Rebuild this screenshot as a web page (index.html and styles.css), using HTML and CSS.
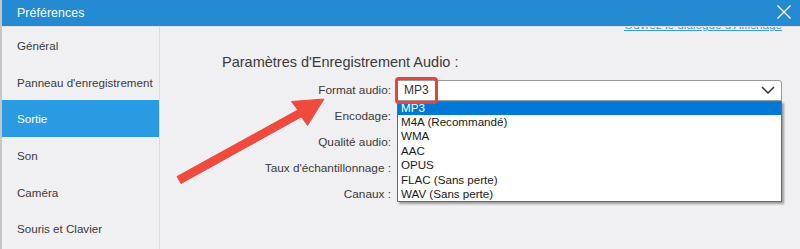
FILE: index.html
```html
<!DOCTYPE html>
<html lang="fr">
<head>
<meta charset="utf-8">
<title>Préférences</title>
<link rel="stylesheet" href="styles.css">
</head>
<body>
<div class="window">
  <div class="titlebar">
    <span class="title">Préférences</span>
    <svg class="close" width="16" height="16" viewBox="0 0 16 16"><path d="M1.5 1.5 L14.5 14.5 M14.5 1.5 L1.5 14.5" stroke="#ffffff" stroke-width="1.3" fill="none"/></svg>
  </div>
  <div class="body">
    <nav class="sidebar">
      <div class="item">Général</div>
      <div class="item">Panneau d'enregistrement</div>
      <div class="item active">Sortie</div>
      <div class="item">Son</div>
      <div class="item">Caméra</div>
      <div class="item">Souris et Clavier</div>
    </nav>
    <main class="main">
      <div class="linkrow"><a class="link">Ouvrez le dialogue d'Affichage</a></div>
      <h2 class="heading">Paramètres d'Enregistrement Audio :</h2>
      <div class="form">
        <div class="label">Format audio:</div>
        <div class="control">
          <div class="select">
            <span class="value">MP3</span>
            <svg class="chev" width="14" height="8" viewBox="0 0 14 8"><path d="M1 1 L7 7 L13 1" stroke="#333" stroke-width="1.5" fill="none"/></svg>
            <div class="highlight"></div>
            <ul class="list">
              <li class="sel">MP3</li>
              <li>M4A (Recommandé)</li>
              <li>WMA</li>
              <li>AAC</li>
              <li>OPUS</li>
              <li>FLAC (Sans perte)</li>
              <li>WAV (Sans perte)</li>
            </ul>
          </div>
        </div>
        <div class="label">Encodage:</div>
        <div class="control"></div>
        <div class="label">Qualité audio:</div>
        <div class="control"></div>
        <div class="label">Taux d'échantillonnage :</div>
        <div class="control"></div>
        <div class="label">Canaux :</div>
        <div class="control"></div>
      </div>
    </main>
  </div>
  <svg class="arrow" width="800" height="249" viewBox="0 0 800 249">
    <polygon points="175,176.5 295.8,110 289.5,101.5 322,99 305.5,125.5 299.4,116.8 179,183.5" fill="#f04a3e" stroke="#f04a3e" stroke-width="1" stroke-linejoin="round"/>
  </svg>
</div>
</body>
</html>
```

FILE: styles.css
```css
html, body {
  margin: 0;
  padding: 0;
}
body {
  width: 800px;
  height: 249px;
  overflow: hidden;
  background: #f0f0f2;
  font-family: "Liberation Sans", Arial, sans-serif;
  color: #3a3a3a;
}
.window {
  position: relative;
  width: 800px;
  height: 249px;
  box-sizing: border-box;
  border-left: 2px solid #c6c6c8;
  display: flex;
  flex-direction: column;
  overflow: hidden;
}
.titlebar {
  position: relative;
  z-index: 2;
  height: 26px;
  flex: none;
  background: #248bd2;
  display: flex;
  align-items: center;
  justify-content: space-between;
  padding: 0 8px 0 15px;
  border-bottom: 1px solid #e2e2e4;
}
.title {
  color: #ffffff;
  font-size: 12.3px;
  letter-spacing: 0.1px;
}
.close {
  display: block;
  margin-top: -3px;
}
.body {
  flex: 1;
  display: flex;
  min-height: 0;
}
.sidebar {
  width: 157px;
  flex: none;
  border-right: 1px solid #dcdcde;
  display: flex;
  flex-direction: column;
}
.item {
  height: 36.7px;
  display: flex;
  align-items: center;
  padding-left: 15px;
  font-size: 11.6px;
  color: #3a3a3a;
  white-space: nowrap;
}
.item.active {
  background: #2a9be2;
  color: #ffffff;
}
.main {
  flex: 1;
  position: relative;
  padding-right: 18px;
}
.linkrow {
  display: flex;
  justify-content: flex-end;
  margin-top: -9px;
  height: 14px;
  line-height: 14px;
}
.link {
  color: #3b9ae6;
  text-decoration: underline;
  font-size: 11.7px;
}
.heading {
  margin: 21px 0 0 62px;
  font-weight: normal;
  font-size: 14.5px;
  line-height: 18px;
  color: #3a3a3a;
}
.form {
  margin-top: 6px;
  display: grid;
  grid-template-columns: 231px 385px;
  grid-auto-rows: 26px;
  column-gap: 6px;
}
.label {
  display: flex;
  align-items: center;
  justify-content: flex-end;
  font-size: 11.8px;
  color: #3a3a3a;
  white-space: nowrap;
}
.control {
  display: flex;
  align-items: center;
}
.select {
  position: relative;
  width: 100%;
  height: 21px;
  box-sizing: border-box;
  background: #ffffff;
  border: 1px solid #9a9a9a;
  border-radius: 0 3px 0 0;
  display: flex;
  align-items: center;
  justify-content: space-between;
  padding: 0 6px 0 6px;
}
.value {
  font-size: 12px;
  color: #333333;
}
.chev {
  display: block;
}
.highlight {
  position: absolute;
  left: -3px;
  top: -4px;
  width: 43px;
  height: 27px;
  box-sizing: border-box;
  border: 3px solid #e8423f;
  border-radius: 4px;
  z-index: 3;
}
.list {
  position: absolute;
  left: -1px;
  right: -1px;
  top: 20px;
  margin: 0;
  padding: 0;
  list-style: none;
  background: #ffffff;
  border: 1px solid #6a6a6a;
  box-shadow: 2px 2px 2px rgba(0, 0, 0, 0.35);
  z-index: 2;
  height: 101px;
  box-sizing: border-box;
  overflow: hidden;
}
.list li {
  height: 14.5px;
  line-height: 14.5px;
  font-size: 11.6px;
  padding-left: 3px;
  color: #1a1a1a;
  white-space: nowrap;
}
.list li.sel {
  height: 13px;
  line-height: 12px;
  background: #0078d7;
  color: #ffffff;
}
.arrow {
  position: absolute;
  left: 0;
  top: 0;
  z-index: 4;
  pointer-events: none;
}
```
